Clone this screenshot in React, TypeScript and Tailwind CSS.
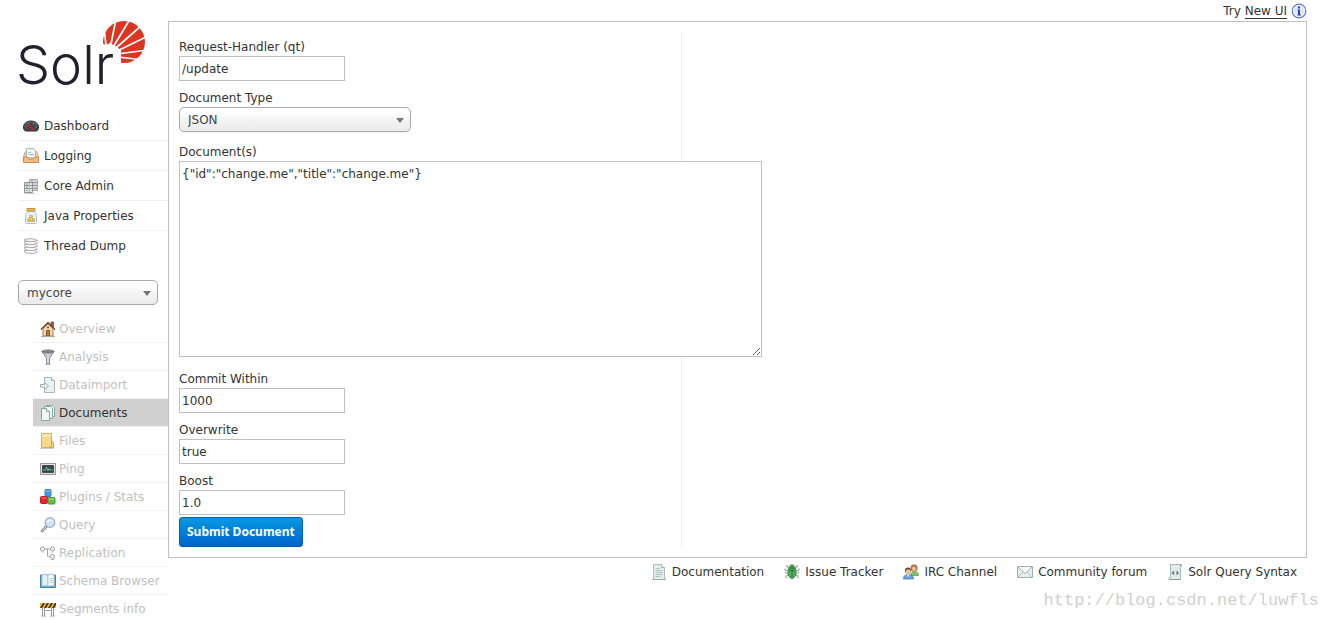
import { useState } from "react";
import type { ReactNode } from "react";
import clsx from "clsx";

function Icon({ children }: { children: ReactNode }) {
  return (
    <svg viewBox="0 0 16 16" className="w-4 h-4 shrink-0" aria-hidden="true">
      {children}
    </svg>
  );
}

const icons = {
  dashboard: (
    <Icon>
      <path d="M.5 9C.5 5.500 4 3 8 3s7.500 2.500 7.500 6c0 2.500-1 4-2.500 4H3C1.500 13 .5 11.500.5 9Z" fill="#45454a" stroke="#2f2f33" />
      <path d="M2 8c1-3 3-4 6-4s5 1 6 4" fill="none" stroke="#6b6b71" />
      <path d="M2.500 9h1M5 5.500l.5 1M11 5.500l-.5 1M12.500 9h1" stroke="#9a9aa0" />
      <path d="m5 7 5.500 5" stroke="#e02020" strokeWidth="1.300" />
    </Icon>
  ),
  logging: (
    <Icon>
      <path d="M2.500 3.500h11l2 5v6H.5v-6Z" fill="#f5d0a0" stroke="#d9a26c" />
      <path d="M3.500.5h7l2 2V10h-9Z" fill="#eef7f5" stroke="#9dbcba" />
      <path d="M5.500 4.500H8M5.500 6.500h5.500" stroke="#9dbdc2" />
      <path d="M.5 9h4l1 2h5l1-2h4v5.500H.5Z" fill="#f3bd80" stroke="#cd8c54" />
    </Icon>
  ),
  core: (
    <Icon>
      <path d="M6.500 1.500h8v11h-8Z" fill="#d3d7d8" stroke="#a2a6ab" />
      <path d="M7 4.500h7M7 7.500h7M7 10.500h7" stroke="#95999e" />
      <path d="M1.500 4.500h8v10h-8Z" fill="#dfe4e1" stroke="#8f9498" />
      <path d="M2 7.500h7M2 10.500h7" stroke="#8d9296" />
      <path d="M3 6h2M3 9h2M3 12.500h2M8 3h2" stroke="#8cab8d" />
      <path d="M6.500 5v9" stroke="#b5babc" />
      <path d="M1 15.500h11" stroke="#ccc" />
    </Icon>
  ),
  java: (
    <Icon>
      <path d="M4 3.500h8c0 2 1.500 2.500 1.500 4v7c0 .6-.4 1-1 1h-9c-.6 0-1-.4-1-1v-7c0-1.500 1.500-2 1.500-4Z" fill="#e7f3fa" stroke="#a6c2d5" />
      <path d="M4 .5h8v2.500H4Z" fill="#e9bb58" stroke="#c8963a" />
      <path d="M4.500 13.500v-2.500L6.500 10V7.500h3V10l2 1v2.500Z" fill="#efc970" stroke="#dbb162" />
      <path d="M6 12h1.500M9 12h1.500M7.500 9.500h1" stroke="#b98a35" />
    </Icon>
  ),
  threads: (
    <Icon>
      <g fill="#f7f7f7" stroke="#adadad">
        <path d="M1.500 12.500h11l2 1.500c-3 2-10 2-13 0Z" />
        <path d="M1.500 9.500h11l2 1.500c-3 2-10 2-13 0Z" />
        <path d="M1.500 6.500h11l2 1.500c-3 2-10 2-13 0Z" />
        <path d="M1.500 3.500h11l2 1.500c-3 2-10 2-13 0Z" />
        <path d="M1.500 1.500c3-1 8-1 11 0l2 1c-3 1.500-10 1.500-13 0Z" />
      </g>
    </Icon>
  ),
  house: (
    <Icon>
      <path d="M11 1h2.500v5H11Z" fill="#b25a40" stroke="#6e3425" strokeWidth=".7" />
      <path d="M3 7.500 8 3l5 4.500v7.500H3Z" fill="#f4d9ad" stroke="#a07a58" />
      <path d="M1 8.500 8 1.500l7 7" fill="none" stroke="#6a463a" strokeWidth="1.400" />
      <path d="M6.500 9.500h3V15h-3Z" fill="#c27a45" stroke="#84502c" />
      <path d="M7 6.500h2" stroke="#8a4c31" strokeWidth="1.500" />
      <path d="M1 15.500h14" stroke="#a5b194" />
    </Icon>
  ),
  funnel: (
    <Icon>
      <path d="M2 2.500 6.500 9v5.500h3V9L14 2.500Z" fill="#c3c4cb" stroke="#8b8e97" />
      <ellipse cx="8" cy="2.500" rx="6" ry="1.500" fill="#85868f" stroke="#74757d" />
      <path d="M8 5v9" stroke="#f0f0f4" />
      <path d="M5 15.500h6" stroke="#bbb" />
    </Icon>
  ),
  dataimport: (
    <Icon>
      <path d="M4.500.5h7l3 3v12h-10Z" fill="#e9f2f2" stroke="#a3b9ba" />
      <path d="M11.500.5v3h3" fill="#fff" stroke="#9cb3b4" />
      <path d="M.5 7.500h4V5.500l4 3.500-4 3.500v-2.500h-4Z" fill="#fafafa" stroke="#98a8a8" />
    </Icon>
  ),
  documents: (
    <Icon>
      <g fill="#f0f7f5" stroke="#8ba5a1">
        <path d="M6.500.5h6l2 2v9h-8Z" />
        <path d="M4.500 1.500h6l2 2v10h-8Z" />
        <path d="M1.500 3.500h5l3 3v9h-8Z" />
      </g>
      <path d="M6.500 3.500v3h3" fill="#fff" stroke="#8ba5a1" />
    </Icon>
  ),
  files: (
    <Icon>
      <path d="M1.500.5h10v14h-10Z" fill="#f5d98c" stroke="#d9ae5c" />
      <path d="M2 1h9v3H2Z" fill="#f9e5ad" />
      <path d="M11.500 8c2 .5 2 2 2 3v3.500h-3c0-2 1-2 1-3Z" fill="#f9dc85" stroke="#cf9f48" />
      <path d="M0 15.500h14" stroke="#ccc" />
    </Icon>
  ),
  ping: (
    <Icon>
      <path d="M.5 2.500h15v11H.5Z" fill="#e4e4e4" stroke="#979797" />
      <path d="M2.500 4.500h11v7h-11Z" fill="#3a4444" stroke="#454d4d" />
      <path d="M3 9h2.500l1-3 1.500 4 1-2.500 1 1.500h3" fill="none" stroke="#58d0a8" strokeWidth=".9" />
    </Icon>
  ),
  plugins: (
    <Icon>
      <rect x="5" y=".5" width="6" height="7" rx="1" fill="#3f97df" stroke="#2f7fc6" />
      <path d="M5.500 2h5" stroke="#8cc7f5" />
      <rect x=".5" y="7.500" width="7" height="7" rx="1" fill="#df2632" stroke="#c51c28" />
      <path d="M1.500 9h5" stroke="#f0767c" />
      <rect x="8" y="8.500" width="7" height="6.500" rx="1" fill="#69bd45" stroke="#4b9a35" />
      <path d="M9 10h5" stroke="#aee08e" />
    </Icon>
  ),
  query: (
    <Icon>
      <path d="m2 14 4.500-4.500" stroke="#8e8e92" strokeWidth="2.800" strokeLinecap="round" />
      <path d="m2 14 4-4" stroke="#e8e8e8" strokeLinecap="round" />
      <circle cx="10" cy="5.500" r="4.800" fill="#cfe4fa" stroke="#a8abbc" strokeWidth="1.200" />
      <path d="M7 5.500c0-2 1.500-3 3-3s3 1 3 2c-2-.5-4 0-6 1Z" fill="#f4faff" />
    </Icon>
  ),
  replication: (
    <Icon>
      <path d="M4 4h7M7.500 4v7.500H11" fill="none" stroke="#a5a5a5" />
      <g fill="#fff" stroke="#989898">
        <circle cx="2.500" cy="4" r="2" />
        <circle cx="12.500" cy="4" r="2" />
        <circle cx="12.500" cy="11.500" r="2" />
      </g>
      <path d="M1 7h3M11 7h3M10 14.500h5" stroke="#ccc" />
    </Icon>
  ),
  book: (
    <Icon>
      <path d="M.5 2h15v12.500H.5Z" fill="#6fabca" stroke="#4584a9" />
      <path d="M2 1.500c3-.5 5 0 6 1v11c-1-1-3-1-6-.5Z" fill="#e3f2f6" stroke="#9cbccb" strokeWidth=".8" />
      <path d="M14 1.500c-3-.5-5 0-6 1v11c1-1 3-1 6-.5Z" fill="#fff" stroke="#9cbccb" strokeWidth=".8" />
      <path d="M9.500 5.500H13M9.500 7.500H13M9.500 9.500H13" stroke="#b5cbd3" />
    </Icon>
  ),
  barrier: (
    <Icon>
      <path d="M2.500 6v9M4.500 6v9M11.500 6v9M13.500 6v9" stroke="#9a9a9a" />
      <path d="M1 15h5M10 15h5M5 9.500h6" stroke="#aaa" />
      <path d="M0 2h16v5H0Z" fill="#f6b92c" />
      <path d="m0 7 3-5h2L2 7Zm4 0 3-5h2L6 7Zm4 0 3-5h2l-3 5Zm4 0 3-5h1v2l-2 3Z" fill="#38332b" />
    </Icon>
  ),
  documentation: (
    <Icon>
      <path d="M2.500.5h8l3 3v12h-11Z" fill="#e3edec" stroke="#afbdbb" />
      <path d="M10.500.5v3h3" fill="#fff" stroke="#a0b0ae" />
      <path d="M4.500 4.500h4M4.500 6.500h7M4.500 8.500h7M4.500 10.500h7M4.500 12.500h5" stroke="#b2c3c2" />
      <path d="M1 15.500h14" stroke="#9eaaaa" />
    </Icon>
  ),
  bug: (
    <Icon>
      <path d="M5 4 3 3V1M11 4l2-1V1M4 7 1 6V4.500M12 7l3-1V4.500M4 9H1M12 9h3M4 11l-2 1v2M12 11l2 1v2" fill="none" stroke="#6d8f70" strokeWidth=".9" />
      <path d="M5.500 3.500C5.500 1.500 6.500 1 8 1s2.500.5 2.500 2.500Z" fill="#5ba560" stroke="#3f7e47" />
      <path d="M4.500 4.500h7c1 4 .5 9.500-3.500 10-4-.5-4.500-6-3.500-10Z" fill="#4fae57" stroke="#348446" />
      <path d="M5.500 6.500h5M8 7v6" stroke="#2c7039" />
    </Icon>
  ),
  people: (
    <Icon>
      <circle cx="11" cy="4" r="3.500" fill="#b86934" />
      <path d="M9 4.500c0-1 1-2 2-2s2 1 2 2-.8 2.500-2 2.500-2-1.500-2-2.500Z" fill="#f4c79a" />
      <path d="M8 11.500c0-2.500 1-4 3-4 3 0 4.500 1.500 4.500 4Z" fill="#7cc371" stroke="#539a4b" strokeWidth=".7" />
      <circle cx="5" cy="6.500" r="3" fill="#5b4534" />
      <circle cx="5.300" cy="7.800" r="2.500" fill="#efc08c" />
      <path d="M.5 15c0-3 1.500-4.500 4.500-4.500s5.500 1.500 5.500 4.500Z" fill="#6ba4de" stroke="#3f74b3" strokeWidth=".7" />
      <path d="m4 10.500 1.200 2.500 1.300-2.500Z" fill="#fff" />
    </Icon>
  ),
  mail: (
    <Icon>
      <path d="M.5 2.500h15v11H.5Z" fill="#e6efee" stroke="#a0b0ae" />
      <path d="m1 13 5-5M15 13l-5-5" stroke="#b3c2c0" />
      <path d="m1 3 7 6.500L15 3" fill="#f7fbfb" stroke="#a0b0ae" />
    </Icon>
  ),
  script: (
    <Icon>
      <path d="M3.500.5h11c-1 .5-1 1-1 2v13H2.500c-1.500 0-1.500-2 0-2h1Z" fill="#e1eae9" stroke="#a9b9b7" />
      <path d="M2 15.500h12M13 1.500h2" stroke="#8da09e" />
      <path d="M7 7.500 5.500 9 7 10.500M9.500 7.500 11 9l-1.500 1.500" fill="none" stroke="#566" strokeWidth="1.200" />
    </Icon>
  ),
  info: (
    <Icon>
      <circle cx="8" cy="8" r="6.800" fill="#dfe5f3" stroke="#5b7ae0" strokeWidth="1.200" />
      <circle cx="8" cy="8" r="5.600" fill="none" stroke="#fff" strokeWidth=".8" />
      <path d="M7 3.500h2v2H7ZM6.500 6.500H9v5h1v1H6.500v-1H7v-4h-.5Z" fill="#2747b8" />
    </Icon>
  ),
};

const mainNav = [
  { label: "Dashboard", icon: icons.dashboard },
  { label: "Logging", icon: icons.logging },
  { label: "Core Admin", icon: icons.core },
  { label: "Java Properties", icon: icons.java },
  { label: "Thread Dump", icon: icons.threads },
];

const coreNav = [
  { label: "Overview", icon: icons.house },
  { label: "Analysis", icon: icons.funnel },
  { label: "Dataimport", icon: icons.dataimport },
  { label: "Documents", icon: icons.documents },
  { label: "Files", icon: icons.files },
  { label: "Ping", icon: icons.ping },
  { label: "Plugins / Stats", icon: icons.plugins },
  { label: "Query", icon: icons.query },
  { label: "Replication", icon: icons.replication },
  { label: "Schema Browser", icon: icons.book },
  { label: "Segments info", icon: icons.barrier },
];

const footerLinks = [
  { label: "Documentation", icon: icons.documentation },
  { label: "Issue Tracker", icon: icons.bug },
  { label: "IRC Channel", icon: icons.people },
  { label: "Community forum", icon: icons.mail },
  { label: "Solr Query Syntax", icon: icons.script },
];

function Logo() {
  return (
    <svg viewBox="0 0 130 84" className="block w-[130px] h-[84px] overflow-visible" role="img" aria-label="Solr">
      <circle cx="106" cy="24" r="21" fill="#dc3522" />
      <path d="M80 24 88 27 92 25 97 28 103 32 103 46 80 48Z" fill="#fff" />
      <path
        d="M89 36 86 10M91 36 98 1M91 36 112 1M91 36 123 8M91 37 130 18M91 37 130 32M91 38 126 42"
        stroke="#fff"
        strokeWidth="1.700"
      />
      <text x="-2" y="66" fontSize="54" fontWeight="300" fill="#22202c" className="font-['Inter',sans-serif]">
        Solr
      </text>
    </svg>
  );
}

type SelectProps = {
  id: string;
  label?: string;
  options: string[];
  className: string;
};

function Select({ id, label, options, className }: SelectProps) {
  return (
    <div className={clsx("relative", className)}>
      <select
        id={id}
        aria-label={label}
        className="block w-full h-[25px] pl-2 pr-6 appearance-none rounded-[5px] border border-[#aaa] bg-linear-to-b from-white from-20% via-[#f4f4f4] via-50% to-[#ebebeb] text-[#444] shadow-xs"
      >
        {options.map((option) => (
          <option key={option}>{option}</option>
        ))}
      </select>
      <svg viewBox="0 0 10 6" className="absolute right-[6px] top-[11px] w-[10px] h-[6px] pointer-events-none">
        <path d="M1 0h8L5 5Z" fill="#777" />
      </svg>
    </div>
  );
}

function TextField({ id, label, initial }: { id: string; label: string; initial: string }) {
  const [value, setValue] = useState(initial);
  return (
    <div className="flex flex-col items-start">
      <label htmlFor={id} className="h-[18px]">
        {label}
      </label>
      <input
        id={id}
        type="text"
        value={value}
        onChange={(e) => setValue(e.target.value)}
        className="w-[166px] h-[25px] px-[2px] border border-[#c0c0c0] bg-white"
      />
    </div>
  );
}

export default function App() {
  const [active, setActive] = useState("Documents");
  const [body, setBody] = useState('{"id":"change.me","title":"change.me"}');

  return (
    <div className="flex items-start h-screen overflow-hidden bg-white text-[#333] text-[12px] leading-[18px] font-['DejaVu_Sans',Verdana,sans-serif]">
      <aside className="shrink-0 w-[168px] pl-[18px] pt-[18px]">
        <Logo />
        <nav className="mt-[9px]">
          <ul>
            {mainNav.map((item) => (
              <li key={item.label} className="border-b border-[#f0f0f0] last:border-b-0">
                <a href="#" className="flex items-center gap-[5px] h-[29px] pl-[5px]">
                  {item.icon}
                  {item.label}
                </a>
              </li>
            ))}
          </ul>
        </nav>
        <Select id="core" label="Core" options={["mycore"]} className="w-[140px] mt-5" />
        <nav className="mt-[10px] ml-[15px]">
          <ul>
            {coreNav.map((item) => (
              <li key={item.label} className="border-b border-[#f0f0f0]">
                <a
                  href="#"
                  onClick={() => setActive(item.label)}
                  className={clsx(
                    "flex items-center gap-[3px] h-[27px] pl-[7px] whitespace-nowrap",
                    active === item.label ? "bg-[#d0d0d0] text-[#333]" : "text-[#c0c0c0]"
                  )}
                >
                  {item.icon}
                  {item.label}
                </a>
              </li>
            ))}
          </ul>
        </nav>
      </aside>

      <div className="flex-1 min-w-0 pr-[23px]">
        <header className="flex items-center justify-end gap-1 h-[21px]">
          <span>
            Try{" "}
            <a href="#" className="border-b border-[#333]">
              New UI
            </a>
          </span>
          <a href="#" aria-label="About the new UI">
            {icons.info}
          </a>
        </header>

        <main className="border border-[#c0c0c0] p-[10px]">
          <form onSubmit={(e) => e.preventDefault()} className="w-[45%] pt-[6px] border-r border-[#f0f0f0]">
            <div className="flex flex-col gap-2">
              <TextField id="qt" label="Request-Handler (qt)" initial="/update" />
              <div>
                <label htmlFor="type" className="block h-[18px]">
                  Document Type
                </label>
                <Select
                  id="type"
                  options={["JSON", "CSV", "Document Builder", "File Upload", "Solr Command (raw XML or JSON)", "XML"]}
                  className="w-[232px]"
                />
              </div>
            </div>
            <div className="mt-[11px] mb-[13px]">
              <label htmlFor="document" className="block h-[18px]">
                Document(s)
              </label>
              <textarea
                id="document"
                value={body}
                onChange={(e) => setBody(e.target.value)}
                className="relative block w-[583px] h-[196px] px-[2px] py-[3px] border border-[#c0c0c0] bg-white resize"
              />
            </div>
            <div className="flex flex-col gap-2">
              <TextField id="commit" label="Commit Within" initial="1000" />
              <TextField id="overwrite" label="Overwrite" initial="true" />
              <TextField id="boost" label="Boost" initial="1.0" />
            </div>
            <button
              type="submit"
              className="block mt-[2px] h-[30px] px-[7px] rounded-[3px] border border-[#0060b5] bg-linear-to-b from-[#0a9ae0] to-[#0062cc] text-white font-bold whitespace-nowrap font-['Noto_Sans',sans-serif]"
            >
              Submit Document
            </button>
          </form>
        </main>

        <footer>
          <ul className="flex justify-end gap-5 pt-[5px] pr-[10px]">
            {footerLinks.map((link) => (
              <li key={link.label}>
                <a href="#" className="flex items-center gap-[5px] whitespace-nowrap">
                  {link.icon}
                  {link.label}
                </a>
              </li>
            ))}
          </ul>
        </footer>
        <p className="mt-[9px] -mr-3 text-right text-[17px] leading-[22px] text-[#d0d0d0] font-['Liberation_Mono',monospace]">
          http://blog.csdn.net/luwfls
        </p>
      </div>
    </div>
  );
}
